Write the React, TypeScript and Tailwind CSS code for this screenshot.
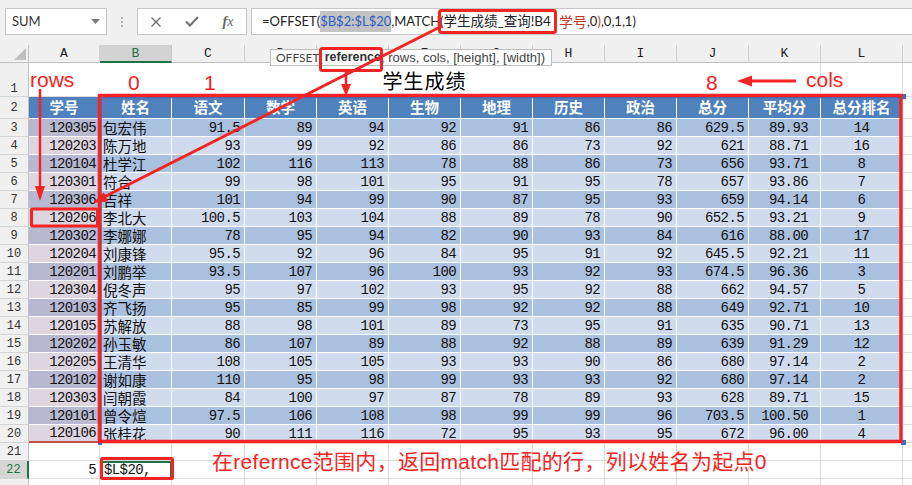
import React from "react";

const data: string[][] = [
  ["120305", "包宏伟", "91.5", "89", "94", "92", "91", "86", "86", "629.5", "89.93", "14"],
  ["120203", "陈万地", "93", "99", "92", "86", "86", "73", "92", "621", "88.71", "16"],
  ["120104", "杜学江", "102", "116", "113", "78", "88", "86", "73", "656", "93.71", "8"],
  ["120301", "符合", "99", "98", "101", "95", "91", "95", "78", "657", "93.86", "7"],
  ["120306", "吉祥", "101", "94", "99", "90", "87", "95", "93", "659", "94.14", "6"],
  ["120206", "李北大", "100.5", "103", "104", "88", "89", "78", "90", "652.5", "93.21", "9"],
  ["120302", "李娜娜", "78", "95", "94", "82", "90", "93", "84", "616", "88.00", "17"],
  ["120204", "刘康锋", "95.5", "92", "96", "84", "95", "91", "92", "645.5", "92.21", "11"],
  ["120201", "刘鹏举", "93.5", "107", "96", "100", "93", "92", "93", "674.5", "96.36", "3"],
  ["120304", "倪冬声", "95", "97", "102", "93", "95", "92", "88", "662", "94.57", "5"],
  ["120103", "齐飞扬", "95", "85", "99", "98", "92", "92", "88", "649", "92.71", "10"],
  ["120105", "苏解放", "88", "98", "101", "89", "73", "95", "91", "635", "90.71", "13"],
  ["120202", "孙玉敏", "86", "107", "89", "88", "92", "88", "89", "639", "91.29", "12"],
  ["120205", "王清华", "108", "105", "105", "93", "93", "90", "86", "680", "97.14", "2"],
  ["120102", "谢如康", "110", "95", "98", "99", "93", "93", "92", "680", "97.14", "2"],
  ["120303", "闫朝霞", "84", "100", "97", "87", "78", "89", "93", "628", "89.71", "15"],
  ["120101", "曾令煊", "97.5", "106", "108", "98", "99", "99", "96", "703.5", "100.50", "1"],
  ["120106", "张桂花", "90", "111", "116", "72", "95", "93", "95", "672", "96.00", "4"],
];

const headers = ["学号", "姓名", "语文", "数学", "英语", "生物", "地理", "历史", "政治", "总分", "平均分", "总分排名"];
const letters = ["A", "B", "C", "D", "E", "F", "G", "H", "I", "J", "K", "L"];
const widths = [
  "w-[71px]", "w-[72px]", "w-[73px]", "w-[72px]", "w-[72px]", "w-[72px]",
  "w-[72px]", "w-[72px]", "w-[72px]", "w-[72px]", "w-[72px]", "w-[82px]",
];
const align = [
  "justify-end pr-[3px]", "justify-start pl-[3px]",
  "justify-end pr-[4px]", "justify-end pr-[4px]", "justify-end pr-[4px]", "justify-end pr-[4px]",
  "justify-end pr-[4px]", "justify-end pr-[4px]", "justify-end pr-[4px]", "justify-end pr-[4px]",
  "justify-end pr-[12px]", "justify-center",
];

const mono = "font-['Liberation_Mono','Noto_Sans_CJK_SC',monospace] text-[14px] tracking-[-0.6px]";
const cjk = "font-['Noto_Sans_CJK_SC',sans-serif] text-[14.5px]";

function RowHead({ n, active }: { n: number; active?: boolean }) {
  return (
    <div
      className={`w-[29px] shrink-0 flex items-center justify-center border-b border-[#d4d4d4] text-[12px] font-['Liberation_Mono',monospace] leading-none ${
        active
          ? "bg-[#d6d6d6] text-[#217346] border-r-2 border-r-[#217346]"
          : "bg-[#f0f0f0] text-[#333] border-r border-r-[#c2c2c2]"
      }`}
    >
      {n}
    </div>
  );
}

export default function App() {
  return (
    <div className="relative w-[912px] h-[485px] overflow-hidden bg-white">
      {/* formula bar */}
      <div className="h-[45px] bg-[#f0f0f0] flex items-start pt-[8px] pl-[5px]">
        <div className="w-[102px] h-[27px] shrink-0 bg-white border border-[#c6c6c6] flex items-center justify-between pl-[6px] pr-[6px]">
          <span className="font-['Lato',sans-serif] text-[13px] text-[#333]">SUM</span>
          <svg width="9" height="5" viewBox="0 0 9 5">
            <path d="M0 0h9L4.5 5z" fill="#7a7a7a" />
          </svg>
        </div>
        <div className="w-[30px] h-[27px] shrink-0 flex flex-col items-center justify-center gap-[2px]">
          <div className="w-[2px] h-[2px] bg-[#b0b0b0]" />
          <div className="w-[2px] h-[2px] bg-[#b0b0b0]" />
          <div className="w-[2px] h-[2px] bg-[#b0b0b0]" />
        </div>
        <div className="w-[110px] h-[27px] shrink-0 bg-white border border-[#c6c6c6] flex items-center">
          <div className="flex-1 flex justify-center">
            <svg width="12" height="12" viewBox="0 0 12 12">
              <path d="M1.5 1.5l9 9M10.5 1.5l-9 9" stroke="#707070" strokeWidth="1.4" />
            </svg>
          </div>
          <div className="flex-1 flex justify-center">
            <svg width="14" height="11" viewBox="0 0 14 11">
              <path d="M1 5.5l4 4L13 1" stroke="#707070" strokeWidth="2" fill="none" />
            </svg>
          </div>
          <div className="flex-1 flex justify-center">
            <span className="font-['Liberation_Serif',serif] italic text-[14px] text-[#666] leading-none">
              <i className="font-bold">f</i>x
            </span>
          </div>
        </div>
        <div className="ml-[4px] -mr-[10px] flex-1 h-[27px] bg-white border border-[#c6c6c6] flex items-center pl-[10px] whitespace-nowrap font-['Lato','Noto_Sans_CJK_SC',sans-serif] text-[13px] text-[#222]">
          <span>=OFFSET(</span>
          <span className="bg-[#c3c3c3] text-[#2c5cc5] h-[21px] flex items-center">$B$2:$L$20</span>
          <span>,MATCH(</span>
          <span className="text-[13.5px]">学生成绩_查询!B4</span>
          <span className="text-[#c0392b] ml-[8px] text-[14px]">学号</span>
          <span>,0</span>
          <span className="text-[#c0392b]">)</span>
          <span>,0,1,1)</span>
        </div>
      </div>

      {/* column header */}
      <div className="flex h-[18px] bg-[#f0f0f0]">
        <div className="w-[29px] shrink-0 border-r border-b border-[#c2c2c2] flex items-end justify-end pr-[2px] pb-[2px]">
          <svg width="12" height="12" viewBox="0 0 12 12">
            <path d="M12 0V12H0z" fill="#c0c0c0" />
          </svg>
        </div>
        {letters.map((l, j) => (
          <div
            key={l}
            className={`${widths[j]} shrink-0 flex items-center justify-center text-[13px] font-['Liberation_Mono',monospace] leading-none ${
              j === 1
                ? "bg-[#d3d3d3] text-[#217346] border-b-2 border-b-[#217346] border-r border-r-[#c6c6c6]"
                : "text-[#222] border-r border-b border-[#d0d0d0] border-b-[#c2c2c2]"
            }`}
          >
            {l}
          </div>
        ))}
        <div className="flex-1 border-b border-[#c2c2c2]" />
      </div>

      {/* row 1 */}
      <div className="flex h-[34px]">
        <div className="w-[29px] shrink-0 flex items-end justify-center pb-[1px] bg-[#f0f0f0] border-r border-b border-[#c2c2c2] border-b-[#d4d4d4] text-[12px] font-['Liberation_Mono',monospace] text-[#333] leading-none">
          1
        </div>
        <div className="w-[792px] shrink-0 flex items-center justify-center border-r border-b border-[#dcdcdc] font-['Noto_Sans_CJK_SC',sans-serif] text-[20px] tracking-[1px] text-black pt-[3px]">
          学生成绩
        </div>
        <div className="w-[82px] shrink-0 border-r border-b border-[#dcdcdc]" />
        <div className="flex-1 border-b border-[#dcdcdc]" />
      </div>

      {/* row 2 header */}
      <div className="flex h-[22px]">
        <RowHead n={2} />
        {headers.map((h, j) => (
          <div
            key={h}
            className={`${widths[j]} shrink-0 flex items-center justify-center bg-[#4f81bd] border-r border-b border-white text-white font-bold ${cjk} leading-none`}
          >
            {h}
          </div>
        ))}
        <div className="flex-1 border-b border-[#dcdcdc]" />
      </div>

      {/* data rows */}
      {data.map((r, i) => {
        const odd = i % 2 === 0;
        const rowNum = i + 3;
        return (
          <div key={rowNum} className="flex h-[18px]">
            <RowHead n={rowNum} />
            {r.map((v, j) => (
              <div
                key={j}
                className={`${widths[j]} shrink-0 flex items-center whitespace-nowrap border-r border-b border-white leading-[16px] text-[#111] ${align[j]} ${
                  j === 0 ? (odd ? "bg-[#b9b8d1]" : "bg-[#ddd6e0]") : odd ? "bg-[#a9c0df]" : "bg-[#d0dcee]"
                } ${j === 1 ? cjk : mono} ${j === 0 && rowNum === 20 ? "border-b-2 border-b-[#c0504d]" : ""}`}
              >
                {v}
              </div>
            ))}
            <div className="flex-1 border-b border-[#dcdcdc]" />
          </div>
        );
      })}

      {/* row 21 */}
      <div className="flex h-[18px]">
        <RowHead n={21} />
        {widths.map((w, j) => (
          <div key={j} className={`${w} shrink-0 border-r border-b border-[#dcdcdc]`} />
        ))}
        <div className="flex-1 border-b border-[#dcdcdc]" />
      </div>

      {/* row 22 */}
      <div className="flex h-[18px]">
        <RowHead n={22} active />
        {widths.map((w, j) => (
          <div
            key={j}
            className={`${w} shrink-0 flex items-center whitespace-nowrap leading-[14px] text-[#111] ${mono} ${
              j === 1 ? "border-2 border-[#217346] pl-[2px]" : "border-r border-b border-[#dcdcdc]"
            } ${j === 0 ? "justify-end pr-[3px]" : ""}`}
          >
            {j === 0 ? "5" : j === 1 ? "$L$20," : ""}
          </div>
        ))}
        <div className="flex-1 border-b border-[#dcdcdc]" />
      </div>

      {/* row 23 (partly visible) */}
      <div className="flex h-[18px]">
        <div className="w-[29px] shrink-0 bg-[#f0f0f0] border-r border-r-[#c2c2c2]" />
        {widths.map((w, j) => (
          <div key={j} className={`${w} shrink-0 border-r border-b border-[#dcdcdc]`} />
        ))}
        <div className="flex-1 border-b border-[#dcdcdc]" />
      </div>

      {/* tooltip */}
      <div className="absolute left-[270px] top-[49px] h-[17px] w-[282px] bg-white border border-[#bdbdbd] flex items-center pl-[5px] whitespace-nowrap text-[#444] leading-none">
        <span className="font-['Lato',sans-serif] text-[12px]">OFFSET(</span>
        <span className="ml-[2px] font-['Liberation_Sans',sans-serif] font-bold text-[12.5px] text-[#333]">reference</span>
        <span className="font-['Liberation_Sans',sans-serif] text-[13px]">, rows, cols, [height], [width])</span>
      </div>

      {/* annotations */}
      <svg className="absolute left-0 top-0 pointer-events-none" width="912" height="485" viewBox="0 0 912 485">
        <rect x="101" y="97.5" width="800" height="344" fill="none" stroke="#3a6fc4" strokeWidth="1.5" />
        <rect x="901" y="94" width="5" height="5" fill="#3a6fc4" />
        <rect x="901" y="440" width="5" height="5" fill="#3a6fc4" />
        <rect x="98" y="441" width="4" height="4" fill="#3a6fc4" />
        <g stroke="#f42424" fill="none">
          <rect x="439.5" y="10.5" width="116" height="22" rx="2" strokeWidth="3" />
          <rect x="320.5" y="48.5" width="61" height="22" rx="2" strokeWidth="3" />
          <rect x="99.5" y="95.5" width="801.5" height="346" strokeWidth="3.5" />
          <rect x="31.5" y="209" width="66" height="17" rx="1" strokeWidth="3" />
          <rect x="101.5" y="458.5" width="71" height="20" rx="1" strokeWidth="3" />
          <line x1="40" y1="89" x2="40" y2="189" strokeWidth="2.5" />
          <line x1="346" y1="71" x2="346" y2="86" strokeWidth="2.5" />
          <line x1="750" y1="81" x2="796" y2="81" strokeWidth="3" />
          <line x1="442" y1="26" x2="104" y2="197" strokeWidth="3" />
        </g>
        <g fill="#f42424">
          <polygon points="40,201 35,186 45,186" />
          <polygon points="346,96 341,84 351,84" />
          <polygon points="737,81 752,75.5 752,86.5" />
          <polygon points="93,203 108.3,201.3 103.8,192.3" />
        </g>
      </svg>

      <div className="absolute left-[30px] top-[69px] font-['Liberation_Sans',sans-serif] text-[21px] leading-none text-[#f42424]">rows</div>
      <div className="absolute left-[128px] top-[72px] font-['Liberation_Sans',sans-serif] text-[21px] leading-none text-[#f42424]">0</div>
      <div className="absolute left-[204px] top-[72px] font-['Liberation_Sans',sans-serif] text-[21px] leading-none text-[#f42424]">1</div>
      <div className="absolute left-[706px] top-[72px] font-['Liberation_Sans',sans-serif] text-[21px] leading-none text-[#f42424]">8</div>
      <div className="absolute left-[806px] top-[69px] font-['Liberation_Sans',sans-serif] text-[21px] leading-none text-[#f42424]">cols</div>
      <div className="absolute left-[212px] top-[451px] whitespace-nowrap font-['Liberation_Sans','Noto_Sans_CJK_SC',sans-serif] text-[21px] tracking-[0.3px] leading-none text-[#f42424]">
        在refernce范围内，返回match匹配的行，列以姓名为起点0
      </div>
    </div>
  );
}
